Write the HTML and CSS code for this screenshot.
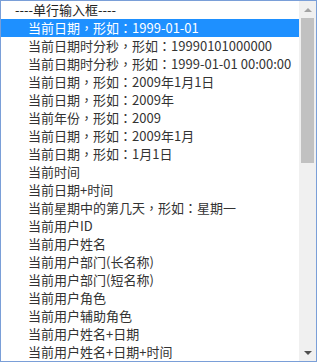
FILE: index.html
```html
<!DOCTYPE html>
<html>
<head>
<meta charset="utf-8">
<link rel="stylesheet" href="styles.css">
</head>
<body>
<div class="box">
  <div class="list">
    <div class="group">----单行输入框----</div>
    <div class="opt sel">当前日期<span class="p">，</span>形如<span class="p">：</span>1999-01-01</div>
    <div class="opt">当前日期时分秒<span class="p">，</span>形如<span class="p">：</span>19990101000000</div>
    <div class="opt">当前日期时分秒<span class="p">，</span>形如<span class="p">：</span>1999-01-01 00:00:00</div>
    <div class="opt">当前日期<span class="p">，</span>形如<span class="p">：</span>2009年1月1日</div>
    <div class="opt">当前日期<span class="p">，</span>形如<span class="p">：</span>2009年</div>
    <div class="opt">当前年份<span class="p">，</span>形如<span class="p">：</span>2009</div>
    <div class="opt">当前日期<span class="p">，</span>形如<span class="p">：</span>2009年1月</div>
    <div class="opt">当前日期<span class="p">，</span>形如<span class="p">：</span>1月1日</div>
    <div class="opt">当前时间</div>
    <div class="opt">当前日期+时间</div>
    <div class="opt">当前星期中的第几天<span class="p">，</span>形如<span class="p">：</span>星期一</div>
    <div class="opt">当前用户ID</div>
    <div class="opt">当前用户姓名</div>
    <div class="opt">当前用户部门(长名称)</div>
    <div class="opt">当前用户部门(短名称)</div>
    <div class="opt">当前用户角色</div>
    <div class="opt">当前用户辅助角色</div>
    <div class="opt">当前用户姓名+日期</div>
    <div class="opt">当前用户姓名+日期+时间</div>
  </div>
  <div class="sb">
    <div class="arrow up"></div>
    <div class="track"><div class="thumb"></div></div>
    <div class="arrow down"></div>
  </div>
</div>
</body>
</html>
```
FILE: styles.css
```css
html, body { margin: 0; padding: 0; background: #fff; }
.box {
  width: 315px;
  height: 360px;
  border: 1px solid #7a9fd8;
  display: flex;
  overflow: hidden;
  font-family: "Noto Sans CJK SC", "Noto Sans", sans-serif;
  font-size: 13px;
  color: #333;
}
.list { flex: 1; min-width: 0; overflow: hidden; }
.group, .opt {
  height: 18px;
  line-height: 18px;
  white-space: nowrap;
  overflow: hidden;
}
.group { padding-left: 14px; color: #222; }
.opt { padding-left: 27px; }
.opt.sel { background: #1e90ff; color: #fff; }
.p { font-family: "Noto Sans CJK TC", "Noto Sans CJK SC", sans-serif; }
.sb {
  width: 17px;
  background: #f0f0f0;
  display: flex;
  flex-direction: column;
}
.arrow { height: 17px; display: flex; align-items: center; justify-content: center; }
.arrow::before { content: ""; width: 0; height: 0; border-left: 4px solid transparent; border-right: 4px solid transparent; }
.up::before { border-bottom: 4px solid #a3a3a3; }
.down::before { border-top: 4px solid #505050; }
.track { flex: 1; padding: 0 2px; }
.thumb { height: 145px; background: #c1c1c1; }
```
